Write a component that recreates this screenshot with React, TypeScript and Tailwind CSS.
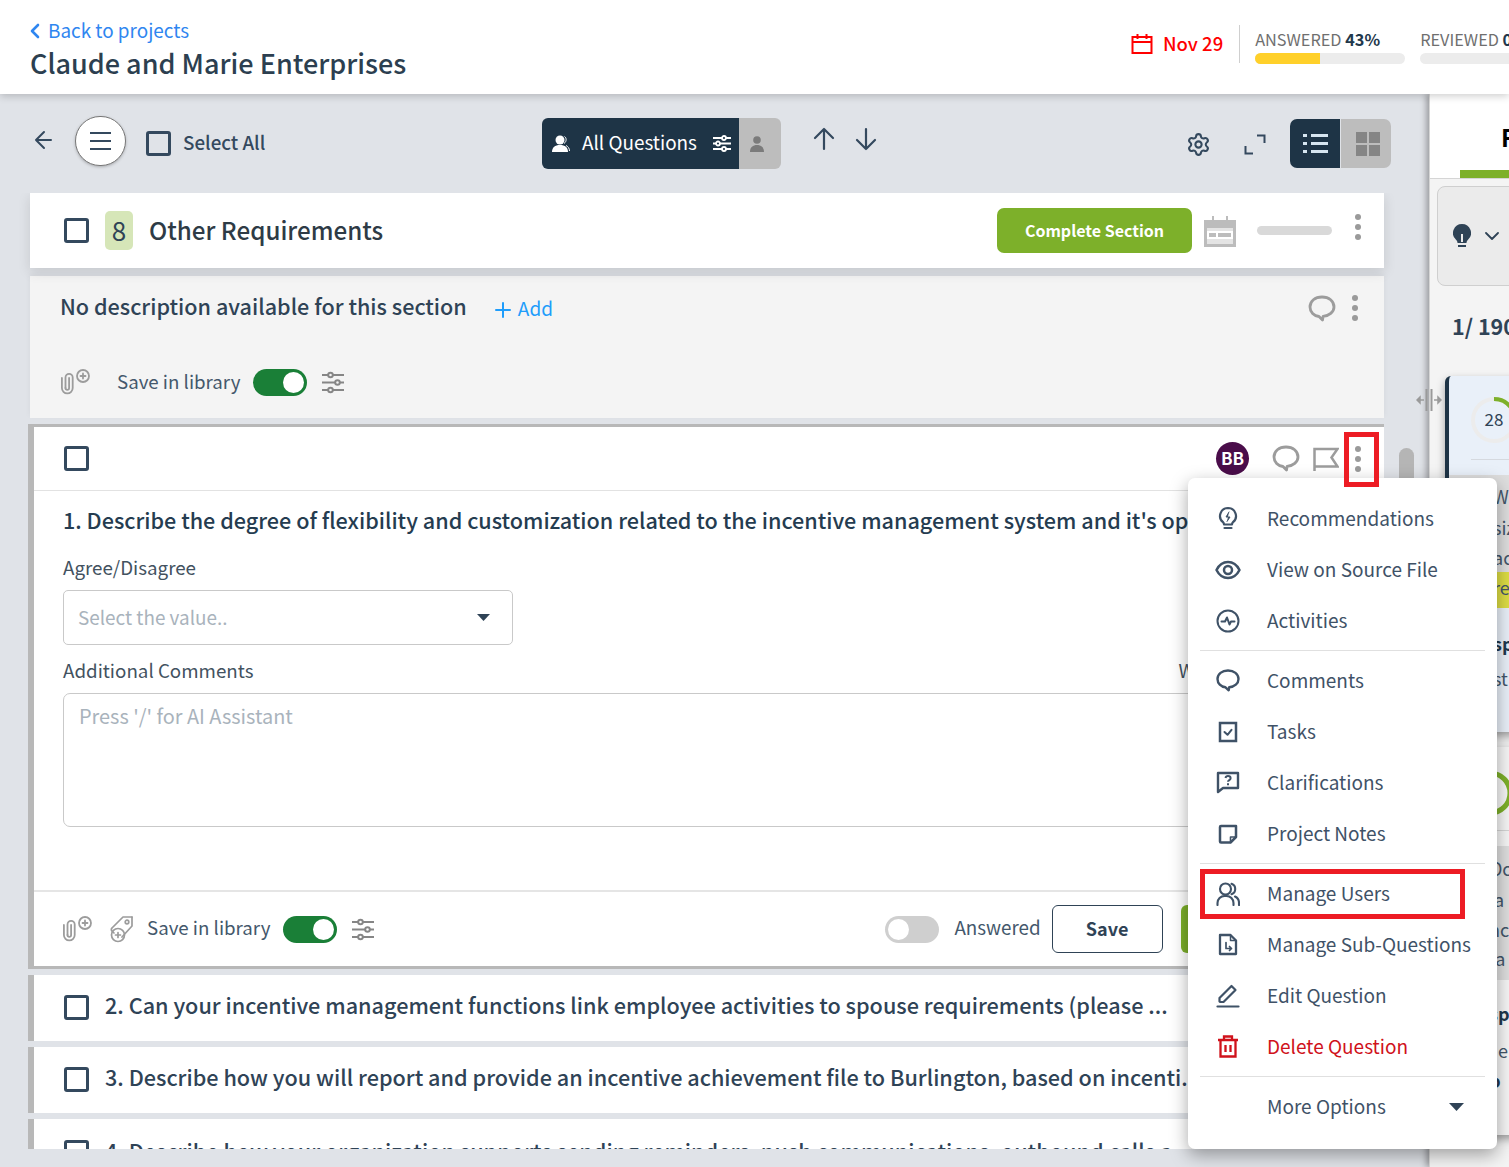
import React from "react";
import { Settings } from "lucide-react";

type IP = { className?: string };
const S = ({ w, h, vb, className, children, sw = 2 }: { w: number; h: number; vb?: string; className?: string; children: React.ReactNode; sw?: number }) => (
  <svg width={w} height={h} viewBox={vb ?? `0 0 ${w} ${h}`} fill="none" stroke="currentColor" strokeWidth={sw} strokeLinecap="round" strokeLinejoin="round" className={`shrink-0 ${className ?? ""}`}>
    {children}
  </svg>
);

const Check = ({ className }: IP) => <div className={`w-[25px] h-[25px] border-[3px] border-[#34495e] rounded-[3px] shrink-0 bg-transparent ${className ?? ""}`} />;

const Kebab = ({ className }: IP) => (
  <div className={`flex flex-col gap-[4px] items-center shrink-0 ${className ?? ""}`}>
    <div className="w-[6px] h-[6px] rounded-full bg-[#9a9a9a]" />
    <div className="w-[6px] h-[6px] rounded-full bg-[#9a9a9a]" />
    <div className="w-[6px] h-[6px] rounded-full bg-[#9a9a9a]" />
  </div>
);

const Bubble = ({ className }: IP) => (
  <S w={28} h={27} className={className} sw={2.8}>
    <path d="M14 2C7 2 2 6 2 12c0 5 4 9 9 9.5l3.5 3.5.6-3.6C21 21 26 17 26 12 26 6 21 2 14 2Z" />
  </S>
);

const Clip = () => (
  <S w={31} h={26} className="text-[#9c9c9c]" sw={1.8}>
    <path d="M5.500 19V8.500a3.600 3.600 0 0 1 7.200 0V19a5.400 5.400 0 0 1-10.800 0V9" />
    <path d="M9.100 9v10a1.800 1.800 0 0 1-3.600 0" />
    <circle cx="23" cy="7" r="6" />
    <path d="M23 4.500v5M20.500 7h5" />
  </S>
);

const Sliders = () => (
  <S w={24} h={23} className="text-[#868686]" sw={2}>
    <path d="M1 4h6M12 4h11M1 11.500h13M19 11.500h4M1 19h6M12 19h11" strokeLinecap="butt" />
    <circle cx="9.500" cy="4" r="2.300" />
    <circle cx="16.500" cy="11.500" r="2.300" />
    <circle cx="9.500" cy="19" r="2.300" />
  </S>
);

const Toggle = ({ on }: { on: boolean }) =>
  on ? (
    <div className="w-[54px] h-[27px] rounded-full bg-[#1a7f37] flex items-center justify-end pr-[3px] shrink-0">
      <div className="w-[21px] h-[21px] rounded-full bg-white" />
    </div>
  ) : (
    <div className="w-[54px] h-[27px] rounded-full bg-[#cfcfcf] flex items-center pl-[3px] shrink-0">
      <div className="w-[21px] h-[21px] rounded-full bg-white" />
    </div>
  );

const menuIcons: Record<string, React.ReactNode> = {
  rec: (
    <S w={24} h={26} sw={2.200}>
      <path d="M12 2a8 8 0 0 0-5 14.200c.8.700 1 1.300 1 2.300h8c0-1 .2-1.600 1-2.300A8 8 0 0 0 12 2Z" />
      <path d="M8.500 22h7" />
      <path d="M13 6l-3 5h4l-3 4.500" fill="currentColor" strokeWidth={1} />
    </S>
  ),
  eye: (
    <S w={26} h={20} sw={2.500}>
      <path d="M1.500 10C4 5 8 2 13 2s9 3 11.500 8C22 15 18 18 13 18S4 15 1.500 10Z" />
      <circle cx="13" cy="10" r="4" />
    </S>
  ),
  act: (
    <S w={24} h={24} sw={2}>
      <circle cx="12" cy="12" r="10.500" />
      <path d="M5.500 12.500h3.500l2-4 2.500 7 1.500-3h3.500" />
    </S>
  ),
  com: (
    <S w={24} h={23} sw={2.400}>
      <path d="M12 1.500C6 1.500 1.500 5 1.500 10c0 4.500 3.500 7.800 8 8.300l3.200 3 .5-3C18.500 18 22.500 14.500 22.500 10 22.500 5 18 1.500 12 1.500Z" />
    </S>
  ),
  task: (
    <S w={20} h={22} sw={2.500}>
      <path d="M2 2h16v18H2z" strokeLinejoin="miter" />
      <path d="M6.500 11l3 2.800 4-5" strokeWidth={2} />
    </S>
  ),
  clar: (
    <svg width="24" height="23" viewBox="0 0 24 23" fill="none" stroke="currentColor" strokeWidth="2.400" className="shrink-0">
      <path d="M2 2h20v15H7l-5 4z" strokeLinejoin="round" />
      <path d="M9.500 7c.3-1.500 1.300-2 2.500-2 1.500 0 2.600.9 2.600 2.200 0 1.900-2.600 1.900-2.600 3.600" strokeWidth="2" />
      <path d="M12 12.300v2" strokeWidth="2" />
    </svg>
  ),
  note: (
    <S w={20} h={20} sw={2.500}>
      <path d="M3 2h15v11l-5.500 5.500H3a1 1 0 0 1-1-1V3a1 1 0 0 1 1-1Z" />
      <path d="M18 13h-5.500v5.500" strokeWidth={1.600} />
    </S>
  ),
  users: (
    <S w={24} h={24} sw={2.100}>
      <circle cx="9.500" cy="7" r="5.500" />
      <path d="M1.500 23v-2a7 7 0 0 1 7-7h2a7 7 0 0 1 7 7v2" />
      <path d="M15.500 1.800a5.500 5.500 0 0 1 0 10.400" />
      <path d="M19 14.500a7 7 0 0 1 4 6.500v2" />
    </S>
  ),
  sub: (
    <S w={20} h={23} sw={2.300}>
      <path d="M2 2h10.500L18 7.500V21H2z" />
      <path d="M12.500 2v5.500H18" strokeWidth={1.500} />
      <path d="M8 9.500v6h5.500M11.500 13.500l2 2-2 2" strokeWidth={1.700} />
    </S>
  ),
  edit: (
    <S w={24} h={24} sw={2.200}>
      <path d="M3.500 17.500v-3.500L15.500 2l4 4L7.500 18H4" />
      <path d="M1.500 22.500h21" />
    </S>
  ),
  del: (
    <S w={22} h={23} sw={2.300}>
      <path d="M1 5h20M7 5V1.500h8V5M3.500 5v16.500h15V5" strokeLinejoin="miter" strokeLinecap="butt" />
      <path d="M8.500 10v7M13.500 10v7" strokeLinecap="butt" />
    </S>
  ),
};

const MenuItem = ({ icon, label, red }: { icon?: string; label: string; red?: boolean }) => (
  <div className={`h-[51px] flex items-center ${red ? "text-[#d0121b]" : "text-[#3f5267]"}`}>
    <div className="w-[79px] flex justify-center shrink-0">{icon ? menuIcons[icon] : null}</div>
    <span className="mb-[2px] text-[19px] leading-[26px] whitespace-nowrap">{label}</span>
  </div>
);

const MenuDiv = () => (
  <div className="h-[9px] flex items-center px-[12px]">
    <div className="h-[1.500px] w-full bg-[#e0e0e0]" />
  </div>
);

const Frag = ({ h, t, bold, bg, mt = 0 }: { h: number; t: string; bold?: boolean; bg?: string; mt?: number }) => (
  <div className={`pl-[44px] flex items-center whitespace-nowrap text-[18px] shrink-0 ${bold ? "font-semibold text-[#21384d]" : "text-[#43566a]"} ${bg ?? ""}`} style={{ height: h, marginTop: mt }}>
    {t}
  </div>
);

const Row = ({ text, clip }: { text: string; clip?: boolean }) => (
  <div className={`ml-[-2px] w-[1356px] bg-white border-l-[6px] border-[#b8b8b8] flex pl-[30px] shrink-0 h-[66px] ${clip ? "items-start pt-[21px]" : "items-center mb-[6px]"}`}>
    <Check className={clip ? "" : "mb-[2px]"} />
    <div className={`ml-[16px] w-[1085px] overflow-hidden whitespace-nowrap text-[21.65px] leading-[32px] font-medium text-[#2f4356] ${clip ? "-mt-[5px]" : "mb-[6px]"}`}>{text}</div>
  </div>
);

export default function App() {
  return (
    <div className="relative w-[1509px] h-[1167px] overflow-hidden flex flex-col bg-[#e0e3e8] font-['Noto_Sans_CJK_SC','Noto_Sans',sans-serif]">
      {/* top bar */}
      <header className="relative z-20 h-[94px] shrink-0 bg-white shadow-[0_2px_8px_rgba(0,0,0,0.2)] flex overflow-hidden">
        <div className="w-[1131px] shrink-0 pl-[30px] pt-[16px]">
          <div className="flex items-center text-[#2f86f0] h-[28px]">
            <S w={10} h={16} sw={2.600} className="mr-[8px] mt-[2px]"><path d="M8 2 2 8l6 6" /></S>
            <span className="text-[18.9px] leading-[26px]">Back to projects</span>
          </div>
          <div className="text-[27px] leading-[36px] font-medium text-[#2c3f50] mt-[1px] whitespace-nowrap">Claude and Marie Enterprises</div>
        </div>
        <div className="flex shrink-0 items-center h-[88px] text-[#ff0000]">
          <S w={22} h={21} sw={2} className="mb-[1px]">
            <path d="M1.500 4h19v16h-19zM1.500 9h19M6.500 1v5M15.500 1v5" strokeLinejoin="miter" strokeLinecap="butt" />
          </S>
          <span className="ml-[10px] mb-[2px] text-[18.5px] font-medium leading-[26px]">Nov 29</span>
          <div className="ml-[16px] w-[1px] h-[38px] bg-[#cfcfcf]" />
          <div className="ml-[15px] w-[150px] mt-[3px]">
            <div className="text-[16.3px] leading-[22px] text-[#6f6f6f] whitespace-nowrap">
              ANSWERED <span className="font-semibold text-[#22384c]">43%</span>
            </div>
            <div className="h-[11px] mt-[3px] rounded-full bg-[#ececec] overflow-hidden">
              <div className="h-full w-[43%] bg-[#ffd02a]" />
            </div>
          </div>
          <div className="ml-[15px] w-[150px] mt-[3px]">
            <div className="text-[16.3px] leading-[22px] text-[#6f6f6f] whitespace-nowrap">
              REVIEWED <span className="font-semibold text-[#22384c]">0%</span>
            </div>
            <div className="h-[11px] mt-[3px] rounded-full bg-[#ececec]" />
          </div>
        </div>
      </header>

      <div className="flex flex-1 min-h-0">
        {/* main column */}
        <main className="w-[1429px] shrink-0 flex flex-col">
          {/* toolbar */}
          <div className="h-[99px] shrink-0 flex items-start pl-[34px] text-[#34495e]">
            <S w={18} h={20} sw={2} className="mt-[36px]"><path d="M17 10H2M10 2l-8 8 8 8" /></S>
            <div className="ml-[23px] mt-[22px] w-[51px] h-[50px] rounded-full bg-white border border-[#777] shadow-[0_1px_3px_rgba(0,0,0,0.25)] flex flex-col items-center justify-center gap-[6px]">
              <div className="w-[21px] h-[2px] bg-[#34495e]" />
              <div className="w-[21px] h-[2px] bg-[#34495e]" />
              <div className="w-[21px] h-[2px] bg-[#34495e]" />
            </div>
            <Check className="ml-[20px] mt-[37px]" />
            <span className="ml-[12px] mt-[35px] w-[82px] text-[18.8px] leading-[26px] font-medium text-[#34495e] whitespace-nowrap">Select All</span>

            <div className="ml-[277px] mt-[24px] h-[51px] w-[239px] flex rounded-[6px] overflow-hidden shrink-0">
              <div className="w-[197px] bg-[#1e3446] flex items-center text-white pl-[9px]">
                <svg width="19" height="18" viewBox="0 0 19 18" fill="currentColor" className="shrink-0">
                  <circle cx="9" cy="5" r="4.500" />
                  <path d="M1 17c0-4.500 3-7 8-7s8 2.500 8 7z" />
                  <path d="M13.500 1.500c2 1 2.500 5-.5 7M15 10.500c2 .8 3.500 3 3.500 5.500" stroke="currentColor" fill="none" strokeWidth="1" />
                </svg>
                <span className="ml-[12px] w-[115px] mb-[4px] text-[18.9px] leading-[26px] whitespace-nowrap">All Questions</span>
                <span className="ml-[16px]"><svg width="18" height="17" viewBox="0 0 18 17" stroke="currentColor" strokeWidth="1.800" fill="none"><path d="M0 3h9M13 3h5M0 8.500h3M7 8.500h11M0 14h9M13 14h5" /><circle cx="11" cy="3" r="2" /><circle cx="5" cy="8.500" r="2" /><circle cx="11" cy="14" r="2" /></svg></span>
              </div>
              <div className="flex-1 bg-[#bdbdbd] flex items-center justify-center pr-[6px] text-[#7b7b7b]">
                <svg width="14" height="16" viewBox="0 0 14 16" fill="currentColor"><circle cx="7" cy="4" r="3.800" /><path d="M0 16c0-5 3-7 7-7s7 2 7 7z" /></svg>
              </div>
            </div>
            <S w={22} h={24} sw={2.200} className="ml-[32px] mt-[33px]"><path d="M11 22V2M2 11l9-9 9 9" /></S>
            <S w={22} h={24} sw={2.200} className="ml-[20px] mt-[33px]"><path d="M11 2v20M2 13l9 9 9-9" /></S>
            <Settings size={25} strokeWidth={2} className="ml-[309px] mt-[38px] shrink-0" />
            <svg width="22" height="21" viewBox="0 0 22 21" fill="none" stroke="currentColor" strokeWidth="2" className="ml-[33px] mt-[40px] shrink-0"><path d="M13 1.500h7.500V9M9 19.500H1.500V12" /></svg>
            <div className="ml-[24px] mt-[25px] h-[49px] w-[101px] rounded-[7px] overflow-hidden flex shrink-0">
              <div className="w-[50px] bg-[#1e3446] flex flex-col items-center justify-center gap-[5px]">
                {[0, 1, 2].map((i) => (
                  <div key={i} className="flex items-center gap-[4px]">
                    <div className="w-[4px] h-[3px] bg-[#d7e6f0]" />
                    <div className="w-[17px] h-[3px] bg-[#d7e6f0]" />
                  </div>
                ))}
              </div>
              <div className="flex-1 ml-[1px] pl-[3px] bg-[#bdbdbd] flex items-center justify-center">
                <div className="grid grid-cols-2 gap-[2px]">
                  <div className="w-[11px] h-[11px] bg-[#858585]" />
                  <div className="w-[11px] h-[11px] bg-[#858585]" />
                  <div className="w-[11px] h-[11px] bg-[#858585]" />
                  <div className="w-[11px] h-[11px] bg-[#858585]" />
                </div>
              </div>
            </div>
          </div>

          {/* scroller */}
          <div className="h-[956px] shrink-0 flex overflow-hidden pl-[30px]">
            <div className="w-[1354px] shrink-0 flex flex-col">
              {/* section head */}
              <div className="relative z-10 h-[75px] shrink-0 bg-white shadow-[0_4px_12px_rgba(0,0,0,0.12)] flex items-center pl-[34px]">
                <Check />
                <div className="ml-[16px] w-[28px] h-[39px] rounded-[5px] bg-[#d6e6b8] flex items-center justify-center text-[26px] leading-[34px] text-[#2f4356] pb-[2px]">8</div>
                <span className="ml-[16px] mb-[1px] text-[24.2px] leading-[32px] font-medium text-[#2e3b46]">Other Requirements</span>
                <div className="ml-auto flex items-center mr-[23px]">
                  <div className="w-[195px] h-[45px] rounded-[7px] bg-[#7db02a] flex items-center justify-center text-white text-[16px] font-semibold pb-[2px]">Complete Section</div>
                  <svg width="32" height="32" viewBox="0 0 32 32" fill="#bcbcbc" className="ml-[12px] shrink-0">
                    <path d="M0 5h8V1h2v4h12V1h2v4h8v27H0z" />
                    <path d="M3 13h26v16H3z" fill="#e4e4e4" />
                    <path d="M3 16h26v8H3z" fill="#fff" />
                    <path d="M5 18h7v4H5zM14 18h13v4H14z" />
                  </svg>
                  <div className="ml-[21px] w-[75px] h-[9px] rounded-full bg-[#d9d9d9]" />
                  <Kebab className="ml-[23px] mb-[8px]" />
                </div>
              </div>

              {/* description */}
              <div className="mt-[8px] h-[142px] shrink-0 bg-[#f4f4f4] shadow-[0_-2px_6px_rgba(0,0,0,0.05)] pl-[30px] flex flex-col">
                <div className="flex items-start pt-[15px] h-[80px]">
                  <span className="text-[21.6px] leading-[30px] font-medium text-[#2f4356]">No description available for this section</span>
                  <span className="ml-[28px] mt-[4px] flex items-center text-[#1f9dfb]">
                    <S w={16} h={16} sw={2} className="mt-[3px]"><path d="M8 1v14M1 8h14" /></S>
                    <span className="ml-[7px] text-[19px] leading-[26px]">Add</span>
                  </span>
                  <div className="ml-auto flex items-start mr-[26px] text-[#9c9c9c] mt-[4px]">
                    <Bubble />
                    <Kebab className="ml-[16px]" />
                  </div>
                </div>
                <div className="flex items-center h-[28px] mt-[12px]">
                  <Clip />
                  <span className="ml-[26px] mb-[2px] text-[18.7px] leading-[26px] text-[#44586c]">Save in library</span>
                  <div className="ml-[13px]"><Toggle on /></div>
                  <div className="ml-[14px]"><Sliders /></div>
                </div>
              </div>

              {/* question 1 */}
              <div className="ml-[-2px] mt-[6px] w-[1356px] h-[545px] shrink-0 bg-white border-l-[6px] border-t-[3px] border-b-[3px] border-[#b8b8b8] flex flex-col">
                <div className="h-[64px] shrink-0 border-b border-[#e2e2e2] flex items-center pl-[30px] pr-[20px]">
                  <Check />
                  <div className="ml-auto flex items-center text-[#9c9c9c]">
                    <div className="w-[33px] h-[33px] rounded-full bg-[#4a0d4a] text-white flex items-center justify-center text-[17px] leading-[24px] font-bold pb-[2px]">BB</div>
                    <Bubble className="ml-[23px]" />
                    <svg width="26" height="24" viewBox="0 0 26 24" fill="none" stroke="currentColor" strokeWidth="2.500" className="ml-[13px] shrink-0"><path d="M1.500 24V2h23l-6 8.500 6 9h-23" /></svg>
                    <Kebab className="ml-[16px] mr-[3px]" />
                  </div>
                </div>
                <div className="pl-[29px] pt-[13px] flex flex-col">
                  <div className="text-[21.6px] leading-[32px] font-medium text-[#253c50] whitespace-nowrap">1. Describe the degree of flexibility and customization related to the incentive management system and it's options</div>
                  <div className="mt-[17px] text-[18.75px] leading-[28px] text-[#43525f]">Agree/Disagree</div>
                  <div className="mt-[9px] w-[450px] h-[55px] rounded-[5px] border border-[#c9c9c9] flex items-center justify-between pl-[14px] pr-[22px]">
                    <span className="mb-[2px] text-[18.9px] leading-[28px] text-[#a9b3bc]">Select the value..</span>
                    <svg width="13" height="7" viewBox="0 0 13 7" fill="#2f4356" className="shrink-0"><path d="M0 0h13L6.500 7z" /></svg>
                  </div>
                  <div className="mt-[11px] flex text-[18.75px] leading-[28px] text-[#43525f] w-[1290px]">
                    <span>Additional Comments</span>
                    <span className="ml-[925px]">Word</span>
                  </div>
                  <div className="mt-[9px] w-[1282px] h-[134px] rounded-[7px] border border-[#c9c9c9] pl-[15px] pt-[8px] text-[19.9px] leading-[28px] text-[#a9b3bc]">Press '/' for AI Assistant</div>
                </div>
                <div className="mt-[63px] h-[76px] shrink-0 border-t-2 border-[#e5e5e5] flex items-center pl-[28px]">
                  <Clip />
                  <S w={26} h={28} className="ml-[15px] text-[#9c9c9c]" sw={1.700}>
                    <path d="M24 2h-9L4 13a2 2 0 0 0 0 3l2 2" />
                    <path d="M24 2v9L14 22" />
                    <circle cx="19" cy="7" r="1.800" />
                    <circle cx="10" cy="20" r="6.500" />
                    <path d="M10 17.500v5M7.500 20h5" />
                  </S>
                  <span className="ml-[13px] mb-[4px] text-[18.7px] leading-[26px] text-[#44586c]">Save in library</span>
                  <div className="ml-[13px]"><Toggle on /></div>
                  <div className="ml-[14px]"><Sliders /></div>
                  <div className="ml-[510px]"><Toggle on={false} /></div>
                  <span className="ml-[15px] mb-[4px] text-[18.8px] leading-[26px] text-[#44586c]">Answered</span>
                  <div className="ml-[11px] w-[111px] h-[48px] rounded-[6px] border border-[#2f4356] flex items-center justify-center text-[18px] font-semibold text-[#2f4356] pb-[2px]">Save</div>
                  <div className="ml-[18px] w-[160px] h-[48px] rounded-[6px] bg-[#7db02a]" />
                </div>
              </div>

              <div className="h-[6px] shrink-0" />
              <Row text="2. Can your incentive management functions link employee activities to spouse requirements (please ..." />
              <Row text="3. Describe how you will report and provide an incentive achievement file to Burlington, based on incenti..." />
              <Row clip text="4. Describe how your organization supports sending reminders, push communications, outbound calls a..." />
            </div>
            <div className="ml-[15px] mt-[255px] w-[15px] h-[300px] rounded-full bg-[#b5b5b5] shrink-0" />
          </div>
        </main>

        {/* right panel */}
        <aside className="relative z-10 w-[80px] shrink-0 bg-[#f4f4f4] border-l border-[#d5d5d5] shadow-[-3px_0_6px_rgba(0,0,0,0.3)] overflow-hidden flex flex-col">
          <div className="h-[85px] shrink-0 bg-white border-b border-[#d5d5d5] flex flex-col">
            <div className="h-[76px] pl-[71px] pt-[27px] text-[24px] leading-[32px] font-semibold text-black whitespace-nowrap">Filters</div>
            <div className="ml-[30px] w-[200px] h-[8px] bg-[#7db02a]" />
          </div>
          <div className="ml-[7px] mt-[7px] w-[300px] h-[100px] shrink-0 rounded-[8px] border border-[#cfcfcf] bg-[#ebebeb] flex items-center pl-[15px] text-[#2f4356]">
            <svg width="18" height="24" viewBox="0 0 18 24" fill="currentColor" className="shrink-0"><path d="M9 0a9 9 0 0 0-6 15.700c1 1 1.500 2 1.500 3.300h9c0-1.300.5-2.300 1.500-3.300A9 9 0 0 0 9 0Z" /><path d="M5 21h8v2H5z" /><path d="M8 10h2v8H8z" fill="#ebebeb" /></svg>
            <S w={14} h={8} sw={1.800} className="ml-[14px]"><path d="M1 1l6 6 6-6" /></S>
          </div>
          <div className="ml-[22px] mt-[25px] h-[30px] shrink-0 text-[21.5px] leading-[30px] font-semibold text-[#2f4356] whitespace-nowrap">1/ 190</div>
          <div className="ml-[15px] mt-[35px] w-[300px] h-[356px] shrink-0 rounded-tl-[6px] bg-[#e9f0f9] border-l-[4px] border-[#1e3446] flex flex-col shadow-[0_4px_8px_rgba(0,0,0,0.35)]">
            <div className="h-[83px] shrink-0 relative pl-[22px] pt-[21px]">
              <svg width="46" height="46" viewBox="0 0 46 46" fill="none" strokeWidth="4">
                <circle cx="23" cy="23" r="21" stroke="#ececec" />
                <path d="M23 2a21 21 0 0 1 17 8.700" stroke="#7db02a" />
                <text x="23" y="29" textAnchor="middle" fontSize="17" fill="#2f4356" stroke="none">28</text>
              </svg>
            </div>
            <div className="ml-[22px] h-[1px] bg-[#d5d9df] shrink-0" />
            <div className="mt-[15px] shrink-0 pt-[5px] bg-[#dedede]">
              <Frag h={32} t="W" />
              <Frag h={30} t="siz" />
              <Frag h={30} t="ac" />
              <Frag h={36} t="re" bg="bg-[#dddd44] pb-[6px]" />
            </div>
            <Frag h={24} mt={23} t="sp" bold />
            <Frag h={24} mt={11} t="st" />
          </div>
          <div className="ml-[15px] mt-[15px] w-[300px] h-[388px] shrink-0 bg-[#f6f6f6] flex flex-col shadow-[0_4px_8px_rgba(0,0,0,0.35)]">
            <div className="h-[83px] shrink-0 pl-[22px] pt-[23px]">
              <svg width="46" height="46" viewBox="0 0 46 46" fill="none" strokeWidth="5"><circle cx="23" cy="23" r="20" stroke="#7db02a" /></svg>
            </div>
            <div className="ml-[22px] h-[1px] bg-[#d5d5d5] shrink-0" />
            <div className="mt-[15px] shrink-0 h-[134px] bg-[#dedede] flex flex-col justify-center">
              <Frag h={31} t="Oc" />
              <Frag h={31} t="la" />
              <Frag h={29} t="nc" />
              <Frag h={30} t="ta" />
            </div>
            <Frag h={24} mt={21} t="sp" bold />
            <Frag h={24} mt={13} t=", e" />
            <Frag h={24} mt={6} t="b" bold />
          </div>
        </aside>
      </div>

      {/* resize handle */}
      <svg width="26" height="24" viewBox="0 0 26 24" fill="none" stroke="#9a9a9a" strokeWidth="1.500" className="absolute left-[1416px] top-[388px] z-30">
        <path d="M10.500 1v22M15.500 1v22" strokeWidth="2" />
        <path d="M1 12h7M18 12h7" />
        <path d="M1 12l3-3v6zM25 12l-3-3v6z" fill="#9a9a9a" />
      </svg>

      {/* context menu */}
      <div className="absolute left-[1188px] top-[478px] w-[309px] h-[671px] z-40 bg-white rounded-[7px] shadow-[0_6px_18px_rgba(0,0,0,0.35)] pt-[15px] flex flex-col">
        <MenuItem icon="rec" label="Recommendations" />
        <MenuItem icon="eye" label="View on Source File" />
        <MenuItem icon="act" label="Activities" />
        <MenuDiv />
        <MenuItem icon="com" label="Comments" />
        <MenuItem icon="task" label="Tasks" />
        <MenuItem icon="clar" label="Clarifications" />
        <MenuItem icon="note" label="Project Notes" />
        <MenuDiv />
        <MenuItem icon="users" label="Manage Users" />
        <MenuItem icon="sub" label="Manage Sub-Questions" />
        <MenuItem icon="edit" label="Edit Question" />
        <MenuItem icon="del" label="Delete Question" red />
        <MenuDiv />
        <div className="flex items-center">
          <div className="flex-1"><MenuItem label="More Options" /></div>
          <svg width="15" height="8" viewBox="0 0 15 8" fill="#2f4356" className="mr-[33px] shrink-0"><path d="M0 0h15L7.500 8z" /></svg>
        </div>
      </div>

      {/* highlights */}
      <div className="absolute left-[1344px] top-[432px] w-[35px] h-[55px] border-[5px] border-[#ed1c24] z-50" />
      <div className="absolute left-[1200px] top-[869px] w-[265px] h-[50px] border-[5px] border-[#ed1c24] z-50" />
    </div>
  );
}
